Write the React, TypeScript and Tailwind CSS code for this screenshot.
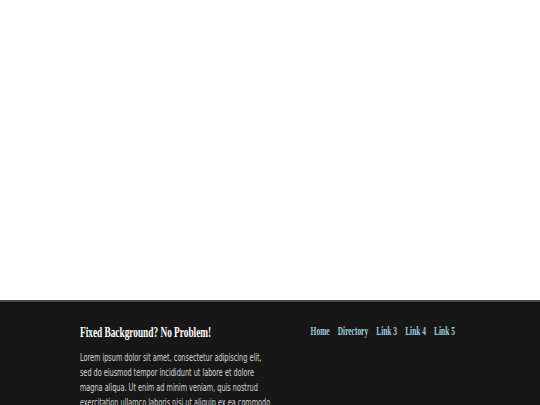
const links = ['Home', 'Directory', 'Link 3', 'Link 4', 'Link 5']

export default function App() {
  return (
    <div className="flex h-[405px] w-[540px] flex-col overflow-hidden bg-white">
      {/* empty hero */}
      <div className="h-[300px] shrink-0 bg-white" />

      {/* footer */}
      <footer className="flex-1 overflow-hidden border-t-2 border-[#4a4a4a] bg-[#171717]">
        <div className="flex w-[830px] origin-top-left scale-x-[0.62] pt-[21px] pl-[129px]">
          <div className="w-[308px] shrink-0">
            <h2 className="font-['Liberation_Serif',serif] text-[15px] font-bold leading-[18px] text-white">
              Fixed Background? No Problem!
            </h2>
            <p className="mt-[9px] font-['DejaVu_Sans',sans-serif] text-[10.5px] leading-[15px] text-[#d8d8d8]">
              Lorem ipsum dolor sit amet, consectetur adipiscing elit, sed do eiusmod tempor incididunt ut labore et
              dolore magna aliqua. Ut enim ad minim veniam, quis nostrud exercitation ullamco laboris nisi ut aliquip
              ex ea commodo consequat.
            </p>
          </div>
          <nav className="ml-[64px] flex h-[16px] items-center gap-[13px] font-['Liberation_Serif',serif] text-[12px] font-bold text-[#9fd0dc]">
            {links.map((l) => (
              <a key={l} href="#">
                {l}
              </a>
            ))}
          </nav>
        </div>
      </footer>
    </div>
  )
}
